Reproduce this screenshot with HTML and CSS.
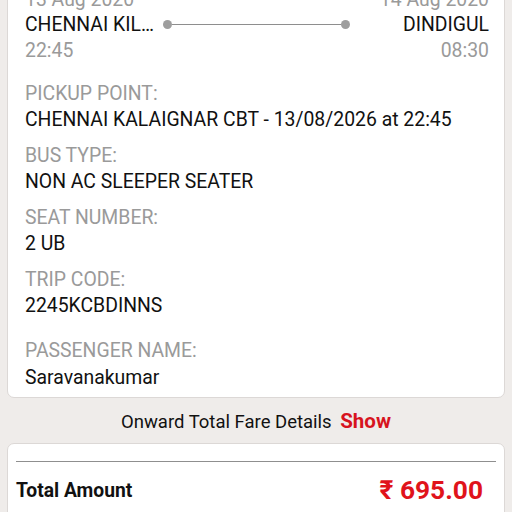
FILE: index.html
```html
<!DOCTYPE html>
<html lang="en">
<head>
    <meta charset="UTF-8">
    <meta name="viewport" content="width=device-width, initial-scale=1.0">
    <title>Ticket Details</title>
    <link rel="stylesheet" href="styles.css">
</head>
<body>
    <div class="card trip-card">
        <div class="journey-row dates">
            <span>13 Aug 2020</span>
            <span>14 Aug 2020</span>
        </div>
        <div class="journey-row cities">
            <span class="city">CHENNAI KIL…</span>
            <div class="route-line">
                <span class="dot"></span>
                <span class="line"></span>
                <span class="dot"></span>
            </div>
            <span class="city">DINDIGUL</span>
        </div>
        <div class="journey-row times">
            <span>22:45</span>
            <span>08:30</span>
        </div>

        <div class="info">
            <div class="info-label">PICKUP POINT:</div>
            <div class="info-value">CHENNAI KALAIGNAR CBT - 13/08/2026 at 22:45</div>
        </div>
        <div class="info">
            <div class="info-label">BUS TYPE:</div>
            <div class="info-value">NON AC SLEEPER SEATER</div>
        </div>
        <div class="info">
            <div class="info-label">SEAT NUMBER:</div>
            <div class="info-value">2 UB</div>
        </div>
        <div class="info">
            <div class="info-label">TRIP CODE:</div>
            <div class="info-value">2245KCBDINNS</div>
        </div>
        <div class="info passenger">
            <div class="info-label">PASSENGER NAME:</div>
            <div class="info-value">Saravanakumar</div>
        </div>
    </div>

    <div class="fare-toggle">
        Onward Total Fare Details <span class="show-link">Show</span>
    </div>

    <div class="card total-card">
        <hr class="divider">
        <div class="total-row">
            <span class="total-label">Total Amount</span>
            <span class="total-amount">&#8377; 695.00</span>
        </div>
    </div>
</body>
</html>
```

FILE: styles.css
```css
body {
    font-family: Roboto, "Noto Sans", sans-serif;
    margin: 0;
    padding: 0 7px;
    background-color: #efecea;
    color: #111;
    font-size: 19.4px;
}

/* Card styling */
.card {
    background-color: #fff;
    border: 1px solid #dcd8d6;
    border-radius: 7px;
}

.trip-card {
    margin-top: -14px;
    padding: 0 15px 6px 17px;
}

/* Journey header */
.journey-row {
    display: flex;
    justify-content: space-between;
    align-items: center;
}

.dates {
    color: #9a9a9a;
    height: 24px;
}

.cities {
    height: 26px;
}

.route-line {
    flex: 1;
    display: flex;
    align-items: center;
    margin: 0 53px 0 9px;
}

.dot {
    width: 9px;
    height: 9px;
    border-radius: 50%;
    background-color: #9e9e9e;
}

.line {
    flex: 1;
    height: 1px;
    background-color: #8e8e8e;
}

.times {
    color: #9a9a9a;
    height: 26px;
    margin-bottom: 18px;
}

/* Info rows */
.info {
    margin-bottom: 10px;
    line-height: 26px;
}

.info-label {
    color: #9a9a9a;
}

.passenger {
    margin-top: 19px;
    margin-bottom: 0;
}

.passenger .info-value {
    margin-top: 1px;
}

/* Fare toggle */
.fare-toggle {
    text-align: center;
    padding: 10px 0 8px;
    font-size: 18.5px;
    line-height: 26px;
}

.show-link {
    color: #d7141e;
    font-weight: bold;
    margin-left: 4px;
    font-size: 20.5px;
}

/* Total card */
.total-card {
    padding: 0 8px;
    height: 80px;
}

.divider {
    border: none;
    border-top: 1px solid #8f8f8f;
    margin: 17px 0 0 0;
}

.total-row {
    display: flex;
    justify-content: space-between;
    align-items: center;
    height: 56px;
    padding-right: 13px;
}

.total-label {
    font-weight: bold;
    font-size: 19.3px;
}

.total-amount {
    color: #e0131b;
    font-weight: bold;
    font-size: 26.3px;
}
```
